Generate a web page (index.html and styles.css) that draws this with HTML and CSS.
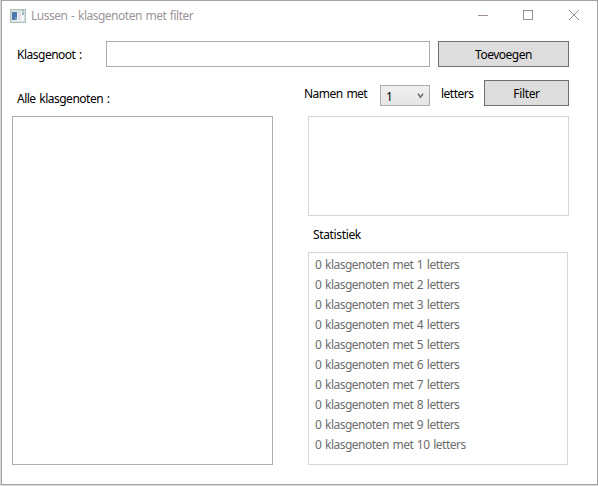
FILE: index.html
```html
<!DOCTYPE html>
<html lang="nl">
<head>
<meta charset="utf-8">
<title>Lussen - klasgenoten met filter</title>
<link rel="stylesheet" href="styles.css">
</head>
<body>
<div class="window">
  <header class="titlebar">
    <svg class="app-icon" width="16" height="14" viewBox="0 0 16 14" shape-rendering="crispEdges">
      <rect width="16" height="14" fill="#b3c0bc"/>
      <rect x="1" y="1" width="14" height="12" fill="#d3dfda"/>
      <rect x="2" y="3" width="12" height="9" fill="#f4f6f8"/>
      <rect x="2" y="3" width="5" height="8" fill="#4c77ad"/>
      <rect x="5" y="8" width="2" height="3" fill="#7599c2"/>
      <rect x="8" y="3" width="3" height="8" fill="#dfe0ea"/>
      <rect x="12" y="3" width="2" height="3" fill="#9dbcc6"/>
      <rect x="12" y="1" width="2" height="1" fill="#8fb79b"/>
    </svg>
    <span class="title">Lussen - klasgenoten met filter</span>
    <svg class="controls" width="102" height="12" viewBox="0 0 102 12" fill="none" stroke="#9c8f94">
      <path d="M0 6.5H10M45.500 1.500h9v9h-9z" shape-rendering="crispEdges"/>
      <path d="M91 1l10 10M101 1L91 11"/>
    </svg>
  </header>
  <main>
    <div class="add-row">
      <label class="name-label" for="name">Klasgenoot :</label>
      <input id="name" class="name-input" type="text">
      <button class="button add">Toevoegen</button>
    </div>
    <div class="columns">
      <section class="left">
        <div class="all-label">Alle klasgenoten :</div>
        <div class="list all"></div>
      </section>
      <section class="right">
        <div class="filter-row">
          <span class="names">Namen met</span>
          <div class="combo"><span>1</span>
            <svg width="7" height="6" viewBox="0 0 7 6" fill="none" stroke="#706a6e" stroke-width="1.500"><path d="M1 .8L3.500 4.200L6 .8"/></svg>
          </div>
          <span class="letters">letters</span>
          <button class="button filter">Filter</button>
        </div>
        <div class="list result"></div>
        <div class="stat-label">Statistiek</div>
        <ul class="list stats">
          <li>0 klasgenoten met 1 letters</li>
          <li>0 klasgenoten met 2 letters</li>
          <li>0 klasgenoten met 3 letters</li>
          <li>0 klasgenoten met 4 letters</li>
          <li>0 klasgenoten met 5 letters</li>
          <li>0 klasgenoten met 6 letters</li>
          <li>0 klasgenoten met 7 letters</li>
          <li>0 klasgenoten met 8 letters</li>
          <li>0 klasgenoten met 9 letters</li>
          <li>0 klasgenoten met 10 letters</li>
        </ul>
      </section>
    </div>
  </main>
</div>
</body>
</html>
```
FILE: styles.css
```css
* { box-sizing: border-box; }
body {
  margin: 0;
  padding: 0 0 1px 1px;
  height: 486px;
  overflow: hidden;
  background: #d9d9d9;
  color: #000;
  font: 12px/16px "Noto Sans", "Open Sans", sans-serif;
  letter-spacing: -0.5px;
  word-spacing: 1px;
  white-space: nowrap;
}
.window { width: 597px; height: 485px; background: #fff; border: 1px solid #a3a3a3; }
.titlebar { display: flex; align-items: center; height: 30px; padding: 0 17px 0 8px; color: #9c9599; }
.app-icon { margin-right: 5px; margin-top: -1px; }
.title { flex: 1; }
.controls { margin-top: -2px; }
main { padding: 10px 0 0 10px; }
.add-row { display: flex; height: 26px; }
.name-label { width: 94px; padding: 6px 0 0 5px; }
.name-input { width: 324px; height: 26px; margin: 0 8px 0 0; padding: 0 4px; border: 1px solid #abadb3; background: #fff; font: inherit; outline: none; }
.button { height: 26px; padding: 1px 0 0; border: 1px solid #707070; border-radius: 0; background: #ddd; color: #000; font: inherit; letter-spacing: inherit; }
.add { width: 131px; }
.columns { display: flex; gap: 35px; }
.left { width: 261px; }
.all-label { height: 49px; padding: 24px 0 0 5px; }
.list { margin: 0; padding: 0; border: 1px solid #d5d5d5; background: #fff; }
.all { height: 349px; border-color: #abadb3; }
.right { width: 261px; }
.filter-row { display: flex; height: 49px; padding-top: 13px; }
.names { width: 76px; margin-left: -4px; padding-top: 6px; }
.combo { display: flex; justify-content: space-between; align-items: flex-start; width: 50px; height: 21px; margin-top: 5px; padding: 3px 5px 0; border: 1px solid #acacac; background: linear-gradient(#f0f0f0, #e5e5e5); }
.combo svg { margin-top: 4px; }
.letters { width: 54px; padding: 6px 0 0 11px; }
.filter { width: 85px; letter-spacing: -0.35px; }
.result { height: 100px; }
.stat-label { height: 36px; padding: 11px 0 0 5px; letter-spacing: -0.35px; }
.stats { width: 260px; height: 213px; padding: 2px 0 0 6px; list-style: none; color: #6d6d6d; }
.stats li { height: 20px; padding-top: 2px; }
```
